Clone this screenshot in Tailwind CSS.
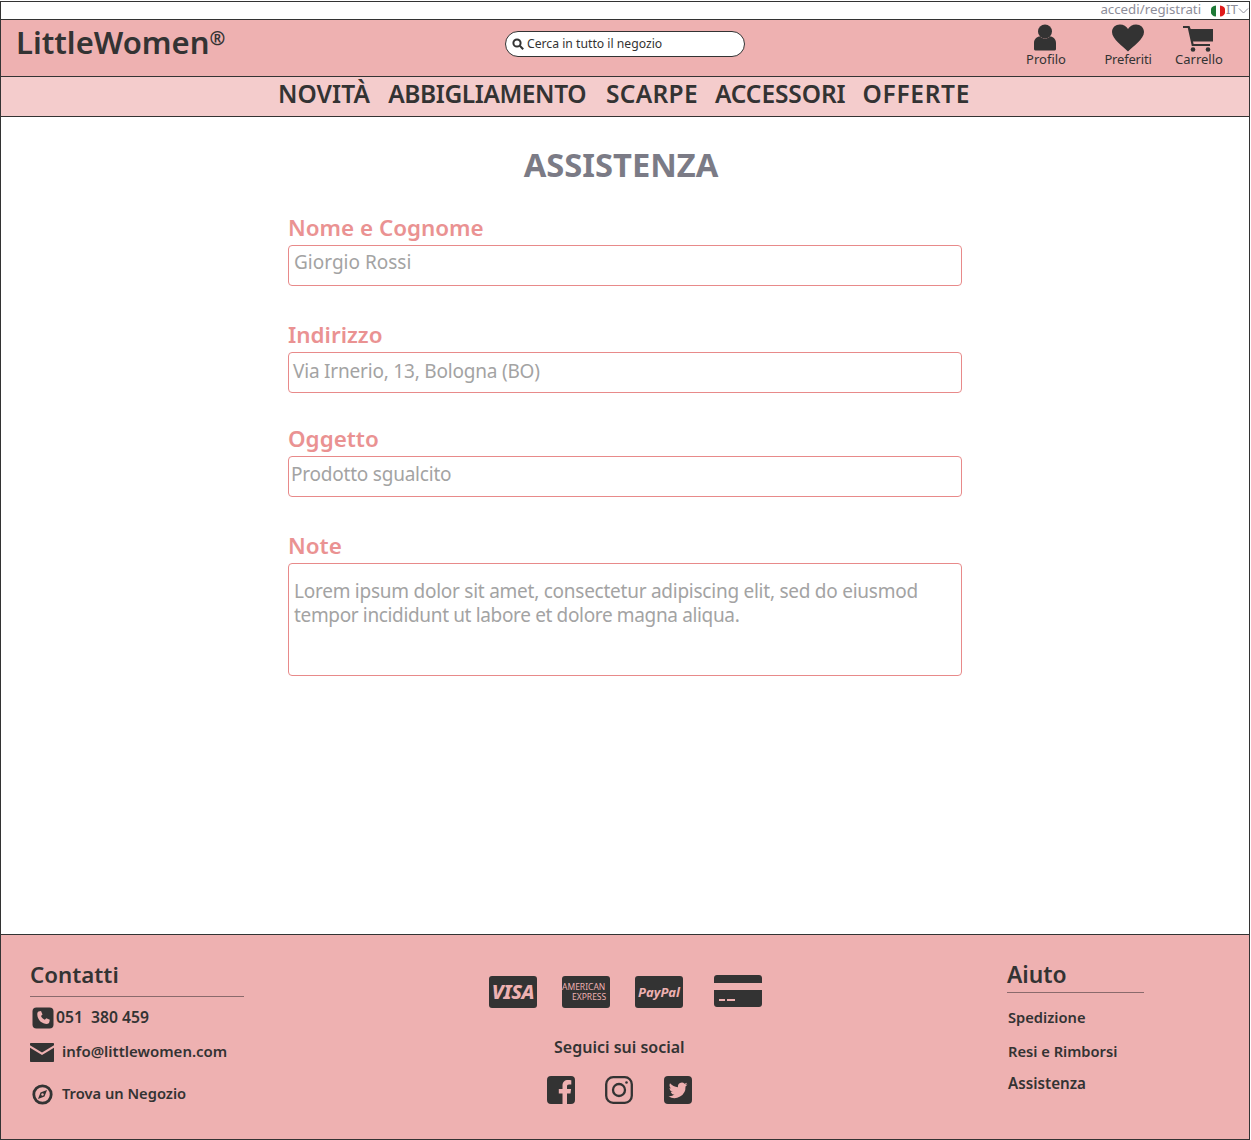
<!DOCTYPE html>
<html lang="it">
<head>
  <meta charset="UTF-8" />
  <title>LittleWomen - Assistenza</title>
  <script src="https://cdn.jsdelivr.net/npm/@tailwindcss/browser@4"></script>
</head>
<body class="bg-white font-['Noto_Sans',sans-serif] text-[#333333]">
<div class="w-[1250px] mt-px border border-b-0 border-[#333333] flex flex-col h-[1139px] overflow-hidden">

  <!-- Top bar -->
  <div class="h-[17px] flex items-center justify-end text-[13.3px] text-[#8d8d99] leading-none">
    <span class="mr-[10px] -mt-[2px]">accedi/registrati</span>
    <svg width="14" height="14" viewBox="0 0 14 14" class="mr-[1px]">
      <path d="M5 1.500A5.500 5.500 0 0 0 5 12.500Z" fill="#1e7a36"/>
      <path d="M9 1.500A5.500 5.500 0 0 1 9 12.500Z" fill="#e01b1b"/>
    </svg>
    <span class="-mt-[1px]">IT</span>
    <svg width="11" height="11" viewBox="0 0 11 11" fill="none" stroke="#8d8d99"><path d="M1 3.500l4.500 4.500 4.500-4.500"/></svg>
  </div>

  <!-- Header -->
  <header class="h-[58px] bg-[#eeb1b1] border-y border-[#333333] flex relative">
    <div class="pl-[15px] -mt-[4px] text-[31px] font-semibold leading-[44px]">LittleWomen<span class="text-[19px] font-bold align-[9px]">®</span></div>
    <div class="absolute left-[504px] top-[11px] w-[240px] h-[26px] bg-white border border-[#333333] rounded-[13px] flex items-center pl-[6px] gap-[3px] text-[12.2px]">
      <svg width="12" height="12" viewBox="0 0 12 12" fill="none" stroke="#333333" stroke-width="2"><circle cx="5" cy="5" r="3.600"/><path d="M7.800 7.800l3.400 3.400"/></svg>
      <span>Cerca in tutto il negozio</span>
    </div>
    <div class="absolute left-[1005px] top-[4px] w-[80px] flex flex-col items-center text-[13px] leading-none">
      <svg width="24" height="28" viewBox="0 0 24 28" fill="#333333" class="-translate-x-[1px]"><circle cx="12" cy="7.500" r="7"/><path d="M1 25v-6c0-4 3-6.500 6-6.500 1.500 1.500 3 2 5 2s3.500-.5 5-2c3 0 6 2.500 6 6.500v6c0 1-1 1.500-2 1.500H3c-1 0-2-.5-2-1.500z"/></svg>
      <span class="mt-[1px]">Profilo</span>
    </div>
    <div class="absolute left-[1087px] top-[4px] w-[80px] flex flex-col items-center text-[13px] leading-none">
      <svg width="32" height="28" viewBox="0 0 32 28" fill="#333333"><path d="M16 27.500C11 22.500 0 15 0 8 0 3.500 3.500.5 8 .5c3.500 0 6.500 2 8 4.500 1.500-2.500 4.500-4.500 8-4.500 4.500 0 8 3 8 7.500 0 7-11 14.500-16 19.500z"/></svg>
      <span class="mt-[1px] tracking-[-0.2px]">Preferiti</span>
    </div>
    <div class="absolute left-[1158px] top-[6px] w-[80px] flex flex-col items-center text-[13px] leading-none">
      <svg width="30" height="26" viewBox="0 0 30 26" fill="#333333" class="-translate-x-[1px]"><path d="M0 0h6.500l1.200 3H30v12.500H10l.6 2.500H27v2H8.800L4.800 2H0z"/><circle cx="10" cy="23.500" r="2.300"/><circle cx="25" cy="23.500" r="2.300"/></svg>
      <span class="mt-[1px]">Carrello</span>
    </div>
  </header>

  <!-- Nav -->
  <nav class="h-[40px] bg-[#f4cccc] border-b border-[#333333] flex items-center justify-center text-[24.5px] font-semibold leading-none pb-[5px] pr-[2px]">
    <a class="mr-[18px] tracking-[0.1px]">NOVITÀ</a>
    <a class="mr-[20px] tracking-[-0.4px]">ABBIGLIAMENTO</a>
    <a class="mr-[17px] tracking-[0.3px]">SCARPE</a>
    <a class="mr-[17px] tracking-[-0.1px]">ACCESSORI</a>
    <a class="tracking-[0.7px]">OFFERTE</a>
  </nav>

  <!-- Main -->
  <main class="flex-1">
    <h1 class="text-center pr-[8px] pt-[30px] text-[32.7px] font-bold leading-[36px] text-[#7b7b86]">ASSISTENZA</h1>
    <form class="w-[674px] ml-[287px] mt-[29px] text-[#ea9292]">
      <label class="block mb-[1px] text-[22.4px] font-semibold leading-[32px]">Nome e Cognome</label>
      <div class="h-[41px] border border-[#e88a8a] rounded-[4px] bg-white pl-[5px] text-[19px] leading-[32px] text-[#a3a3a3]">Giorgio Rossi</div>
      <label class="block mt-[33px] mb-[1px] text-[22.4px] font-semibold leading-[32px]">Indirizzo</label>
      <div class="h-[41px] border border-[#e88a8a] rounded-[4px] bg-white pl-[4px] pt-[2px] text-[19px] leading-[32px] tracking-[-0.2px] text-[#a3a3a3]">Via Irnerio, 13, Bologna (BO)</div>
      <label class="block mt-[30px] mb-[1px] text-[22.4px] font-semibold leading-[32px]">Oggetto</label>
      <div class="h-[41px] border border-[#e88a8a] rounded-[4px] bg-white pl-[2px] text-[19px] leading-[34px] tracking-[-0.22px] text-[#a3a3a3]">Prodotto sgualcito</div>
      <label class="block mt-[33px] mb-[1px] text-[22.4px] font-semibold leading-[32px]">Note</label>
      <div class="h-[113px] border border-[#e88a8a] rounded-[4px] bg-white pl-[5px] pt-[15px] text-[19px] leading-[24px] tracking-[-0.25px] text-[#a3a3a3]">Lorem ipsum dolor sit amet, consectetur adipiscing elit, sed do eiusmod<br><span class="tracking-[-0.35px]">tempor incididunt ut labore et dolore magna aliqua.</span></div>
    </form>
  </main>

  <!-- Footer -->
  <footer class="h-[206px] bg-[#eeb1b1] border-y border-[#333333] relative font-semibold">
    <div class="absolute left-[29px] top-[24px] w-[214px] border-b border-[#8a6a6c] h-[38px] text-[22.3px] leading-[32px]">Contatti</div>
    <div class="absolute left-[29px] top-[71px] flex items-start text-[15.7px] leading-[22px]">
      <svg width="22" height="22" viewBox="0 0 22 22" class="ml-[2px] mt-[1px]"><rect width="21" height="21" x=".5" y=".5" rx="4" fill="#333333"/><path d="M6.500 4.500l2.500-.5 1.500 3.500-1.500 1.500c.7 1.700 2.100 3 3.800 3.800l1.500-1.500 3.500 1.500-.5 2.500c-.3 1.200-1.300 1.700-2.500 1.700-5 0-9.500-4.500-9.500-9.500 0-1.200.2-2.300 1.200-3z" fill="#eeb1b1"/></svg>
      <span class="ml-[2px]">051 &nbsp;380 459</span>
    </div>
    <div class="absolute left-[29px] top-[105px] flex items-start text-[15px] leading-[22px]">
      <svg width="24" height="19" viewBox="0 0 24 19" class="mt-[3px]"><path d="M1 0h22c.6 0 1 .4 1 1v1.200L12 9.500 0 2.200V1c0-.6.4-1 1-1zM0 4.800l12 7.300 12-7.300V18c0 .6-.4 1-1 1H1c-.6 0-1-.4-1-1z" fill="#333333"/></svg>
      <span class="ml-[8px]">info@littlewomen.com</span>
    </div>
    <div class="absolute left-[31px] top-[147px] flex items-start text-[14.7px] leading-[22px]">
      <svg width="21" height="21" viewBox="0 0 21 21" class="mt-[2px]" fill="none"><circle cx="10.500" cy="10.500" r="8.700" stroke="#333333" stroke-width="2.800"/><path d="M15 6l-2.500 6.500L6 15l2.500-6.500z" fill="#333333"/><circle cx="10.500" cy="10.500" r="1.200" fill="#eeb1b1"/></svg>
      <span class="ml-[9px]">Trova un Negozio</span>
    </div>

    <!-- Payment -->
    <div class="absolute left-[488px] top-[41px] flex gap-[25px]">
      <div class="w-[48px] h-[32px] rounded-[3px] bg-[#333333] flex items-center justify-center text-[#eeb1b1] text-[20px] font-extrabold italic leading-none tracking-[-0.4px]">VISA</div>
      <div class="w-[48px] h-[32px] rounded-[3px] bg-[#333333] flex flex-col justify-center text-[#eeb1b1] text-[8.5px] leading-[10px] font-normal whitespace-nowrap">
        <span>AMERICAN</span><span class="pl-[10px]">EXPRESS</span>
      </div>
      <div class="w-[48px] h-[32px] rounded-[3px] bg-[#333333] flex items-center justify-center text-[#eeb1b1] text-[13px] font-bold italic leading-none">PayPal</div>
      <svg width="48" height="32" viewBox="0 0 48 32" class="ml-[6px] -mt-[1px]" fill="#333333"><path d="M3 0h42c1.700 0 3 1.300 3 3v5H0V3c0-1.700 1.300-3 3-3zM0 15h48v14c0 1.700-1.300 3-3 3H3c-1.700 0-3-1.300-3-3z"/><path d="M5 24h6v2H5zM13 24h8v2h-8z" fill="#eeb1b1"/></svg>
    </div>
    <div class="absolute left-[553px] top-[101px] text-[16px] leading-[22px]">Seguici sui social</div>
    <div class="absolute left-[546px] top-[141px] flex items-center gap-[30px]">
      <svg width="28" height="28" viewBox="0 0 28 28"><path d="M4 0h20a4 4 0 0 1 4 4v20a4 4 0 0 1-4 4h-4V17.500h3.500l.6-4.500H20v-2.500c0-1.300.4-2 2-2h2.300V4.200c-.5 0-1.800-.2-3.300-.2-3.300 0-5.500 2-5.500 5.700V13h-3.700v4.500h3.700V28H4a4 4 0 0 1-4-4V4a4 4 0 0 1 4-4z" fill="#333333"/></svg>
      <svg width="28" height="28" viewBox="0 0 28 28" fill="none" stroke="#333333" stroke-width="2.300"><rect x="1.200" y="1.200" width="25.600" height="25.600" rx="7"/><circle cx="14" cy="14" r="6"/><circle cx="21.500" cy="6.500" r="1.300" fill="#333333" stroke="none"/></svg>
      <svg width="28" height="28" viewBox="0 0 28 28" class="ml-[1px]"><path d="M4 0h20a4 4 0 0 1 4 4v20a4 4 0 0 1-4 4H4a4 4 0 0 1-4-4V4a4 4 0 0 1 4-4z" fill="#333333"/><path d="M23.500 8.300c-.7.300-1.400.5-2.200.6.800-.5 1.400-1.200 1.700-2.100-.7.400-1.600.8-2.400.9a3.900 3.900 0 0 0-6.600 3.500C10.800 11 8 9.500 6 7.200c-1 1.800-.5 4 1.200 5.200-.6 0-1.200-.2-1.700-.5 0 1.900 1.300 3.500 3.100 3.900-.6.200-1.200.2-1.800.1.500 1.500 1.900 2.700 3.700 2.700A8 8 0 0 1 4.500 20.300 11 11 0 0 0 21.500 10.500c.8-.6 1.500-1.300 2-2.200z" fill="#eeb1b1"/></svg>
    </div>

    <!-- Help -->
    <div class="absolute left-[1006px] top-[24px] w-[137px] border-b border-[#8a6a6c] h-[34px] text-[22.8px] leading-[32px]">Aiuto</div>
    <div class="absolute left-[1007px] top-[71px] text-[14.7px] leading-[22px]">Spedizione</div>
    <div class="absolute left-[1007px] top-[105px] text-[14.7px] leading-[22px]">Resi e Rimborsi</div>
    <div class="absolute left-[1007px] top-[137px] text-[15.2px] leading-[22px]">Assistenza</div>
  </footer>
</div>
</body>
</html>
